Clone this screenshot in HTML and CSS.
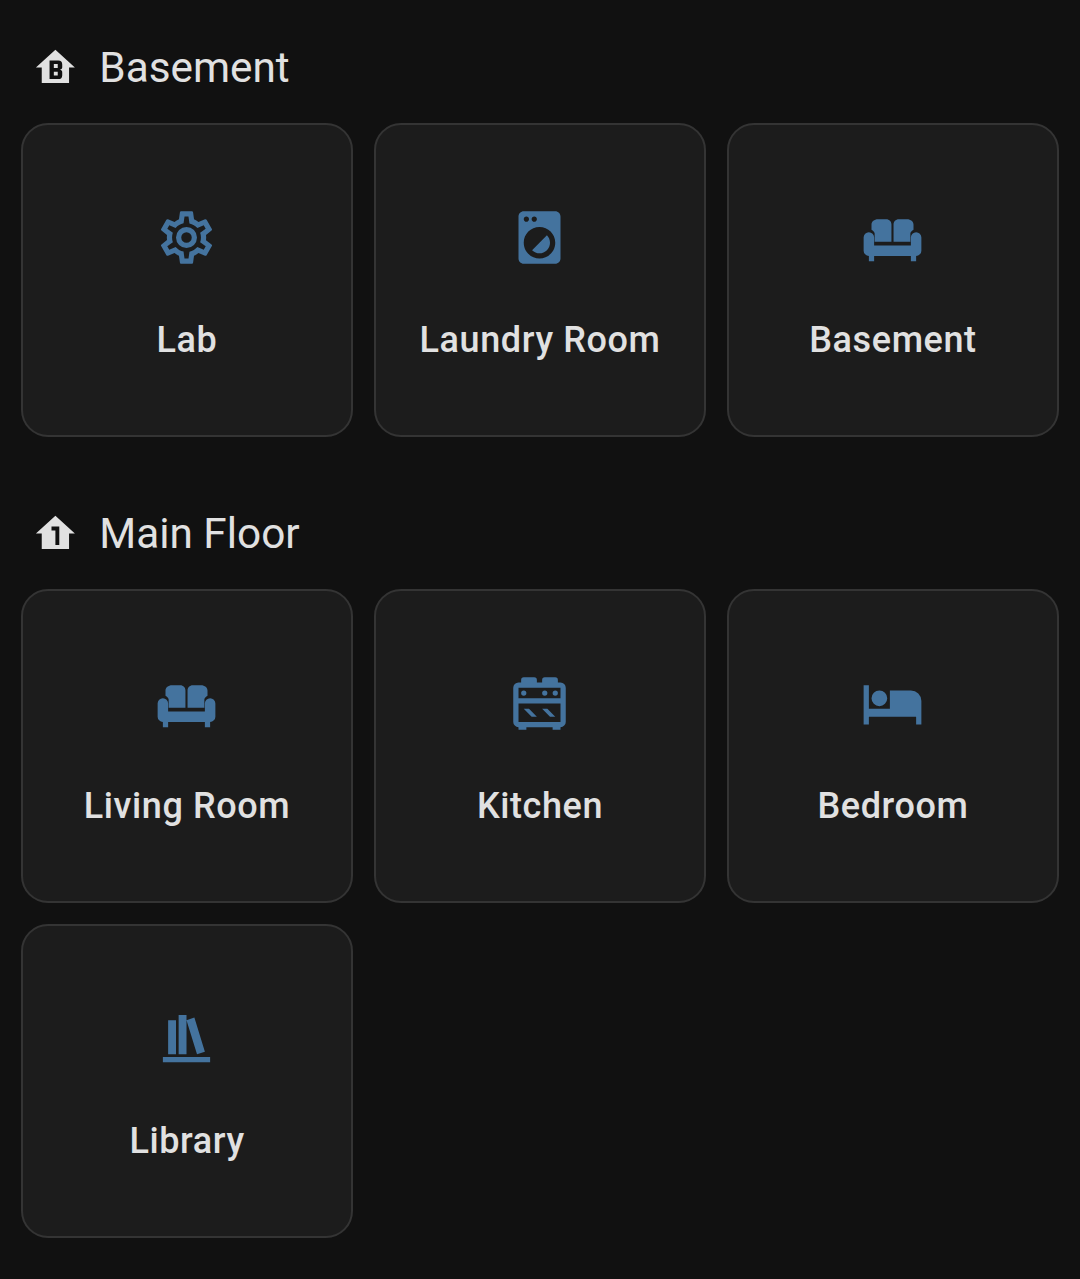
FILE: index.html
```html
<!DOCTYPE html>
<html lang="en">
<head>
    <meta charset="UTF-8">
    <meta name="viewport" content="width=device-width, initial-scale=1.0">
    <title>Areas</title>
    <link rel="stylesheet" href="styles.css">
</head>
<body>
    <section class="floor">
        <h2 class="floor-title">
            <svg class="floor-icon" viewBox="0 0 24 24"><path fill-rule="evenodd" d="M12 3L2 12H5V20H19V12H22L12 3ZM9 8.5H13.5A2 2 0 0 1 15.5 10.5V11.7A1.4 1.4 0 0 1 14.3 13.2A1.4 1.4 0 0 1 15.5 14.7V16A2 2 0 0 1 13.5 18H9ZM11.2 10.3V12.3H13.2V10.3ZM11.2 14.2V16.2H13.2V14.2Z"/></svg>
            <span>Basement</span>
        </h2>
        <div class="area-grid">
            <div class="area-card">
                <svg class="area-icon" viewBox="0 0 24 24"><path d="M12,8A4,4 0 0,1 16,12A4,4 0 0,1 12,16A4,4 0 0,1 8,12A4,4 0 0,1 12,8M12,10A2,2 0 0,0 10,12A2,2 0 0,0 12,14A2,2 0 0,0 14,12A2,2 0 0,0 12,10M10,22C9.75,22 9.54,21.82 9.5,21.58L9.13,18.93C8.5,18.68 7.96,18.34 7.44,17.94L4.95,18.95C4.73,19.03 4.46,18.95 4.34,18.73L2.34,15.27C2.21,15.05 2.27,14.78 2.46,14.63L4.57,12.97L4.5,12L4.57,11L2.46,9.37C2.27,9.22 2.21,8.95 2.34,8.73L4.34,5.27C4.46,5.05 4.73,4.96 4.95,5.05L7.44,6.05C7.96,5.66 8.5,5.32 9.13,5.07L9.5,2.42C9.54,2.18 9.75,2 10,2H14C14.25,2 14.46,2.18 14.5,2.42L14.87,5.07C15.5,5.32 16.04,5.66 16.56,6.05L19.05,5.05C19.27,4.96 19.54,5.05 19.66,5.27L21.66,8.73C21.79,8.95 21.73,9.22 21.54,9.37L19.43,11L19.5,12L19.43,13L21.54,14.63C21.73,14.78 21.79,15.05 21.66,15.27L19.66,18.73C19.54,18.95 19.27,19.04 19.05,18.95L16.56,17.95C16.04,18.34 15.5,18.68 14.87,18.93L14.5,21.58C14.46,21.82 14.25,22 14,22H10M11.25,4L10.88,6.61C9.68,6.86 8.62,7.5 7.85,8.39L5.44,7.35L4.69,8.65L6.8,10.2C6.4,11.37 6.4,12.64 6.8,13.8L4.68,15.36L5.43,16.66L7.86,15.62C8.63,16.5 9.68,17.14 10.87,17.38L11.24,20H12.76L13.13,17.39C14.32,17.14 15.37,16.5 16.14,15.62L18.57,16.66L19.32,15.36L17.2,13.81C17.6,12.64 17.6,11.37 17.2,10.2L19.31,8.65L18.56,7.35L16.15,8.39C15.38,7.5 14.32,6.86 13.12,6.62L12.75,4H11.25Z"/></svg>
                <div class="area-name">Lab</div>
            </div>
            <div class="area-card">
                <svg class="area-icon" viewBox="0 0 24 24"><path d="M14.83,11.17C16.39,12.73 16.39,15.27 14.83,16.83C13.27,18.39 10.73,18.39 9.17,16.83L14.83,11.17M6,2H18C19.11,2 20,2.89 20,4V20C20,21.11 19.11,22 18,22H6C4.89,22 4,21.11 4,20V4C4,2.89 4.89,2 6,2M7,4C6.45,4 6,4.45 6,5C6,5.55 6.45,6 7,6C7.55,6 8,5.55 8,5C8,4.45 7.55,4 7,4M10,4C9.45,4 9,4.45 9,5C9,5.55 9.45,6 10,6C10.55,6 11,5.55 11,5C11,4.45 10.55,4 10,4M12,8C8.69,8 6,10.69 6,14C6,17.31 8.69,20 12,20C15.31,20 18,17.31 18,14C18,10.69 15.31,8 12,8Z"/></svg>
                <div class="area-name">Laundry Room</div>
            </div>
            <div class="area-card">
                <svg class="area-icon" viewBox="0 0 24 24"><path d="M6.5 5H9.6C10.8 5 11.6 5.9 11.6 7V13.6H5.2V10.5C5.2 9.9 4.6 9.4 4 9V7C4 5.9 5 5 6.5 5ZM14.4 5H17.5C19 5 20 5.9 20 7V9C19.4 9.4 18.8 9.9 18.8 10.5V13.6H12.4V7C12.4 5.9 13.2 5 14.4 5ZM3 10A2 2 0 0 1 5 12V15H19V12A2 2 0 0 1 23 12V17A2 2 0 0 1 21 19V21H19V19H5V21H3V19A2 2 0 0 1 1 17V12A2 2 0 0 1 3 10Z"/></svg>
                <div class="area-name">Basement</div>
            </div>
        </div>
    </section>

    <section class="floor">
        <h2 class="floor-title">
            <svg class="floor-icon" viewBox="0 0 24 24"><path d="M12,3L2,12H5V20H19V12H22L12,3M10,8.5H14V18H12V10.5H10V8.5Z"/></svg>
            <span>Main Floor</span>
        </h2>
        <div class="area-grid">
            <div class="area-card">
                <svg class="area-icon" viewBox="0 0 24 24"><path d="M6.5 5H9.6C10.8 5 11.6 5.9 11.6 7V13.6H5.2V10.5C5.2 9.9 4.6 9.4 4 9V7C4 5.9 5 5 6.5 5ZM14.4 5H17.5C19 5 20 5.9 20 7V9C19.4 9.4 18.8 9.9 18.8 10.5V13.6H12.4V7C12.4 5.9 13.2 5 14.4 5ZM3 10A2 2 0 0 1 5 12V15H19V12A2 2 0 0 1 23 12V17A2 2 0 0 1 21 19V21H19V19H5V21H3V19A2 2 0 0 1 1 17V12A2 2 0 0 1 3 10Z"/></svg>
                <div class="area-name">Living Room</div>
            </div>
            <div class="area-card">
                <svg class="area-icon" viewBox="0 0 24 24"><path d="M6,14H8L11,17H9L6,14M4,4H5V3A1,1 0 0,1 6,2H10A1,1 0 0,1 11,3V4H13V3A1,1 0 0,1 14,2H18A1,1 0 0,1 19,3V4H20A2,2 0 0,1 22,6V19A2,2 0 0,1 20,21V22H17V21H7V22H4V21A2,2 0 0,1 2,19V6A2,2 0 0,1 4,4M18,7A1,1 0 0,1 19,8A1,1 0 0,1 18,9A1,1 0 0,1 17,8A1,1 0 0,1 18,7M14,7A1,1 0 0,1 15,8A1,1 0 0,1 14,9A1,1 0 0,1 13,8A1,1 0 0,1 14,7M20,6H4V10H20V6M4,19H20V12H4V19M6,7A1,1 0 0,1 7,8A1,1 0 0,1 6,9A1,1 0 0,1 5,8A1,1 0 0,1 6,7M13,14H15L18,17H16L13,14Z"/></svg>
                <div class="area-name">Kitchen</div>
            </div>
            <div class="area-card">
                <svg class="area-icon" viewBox="0 0 24 24"><path d="M19,7H11V14H3V5H1V20H3V17H21V20H23V11A4,4 0 0,0 19,7M7,13A3,3 0 0,0 10,10A3,3 0 0,0 7,7A3,3 0 0,0 4,10A3,3 0 0,0 7,13Z"/></svg>
                <div class="area-name">Bedroom</div>
            </div>
            <div class="area-card">
                <svg class="area-icon" viewBox="0 0 24 24"><path d="M9 3V18H12V3H9M12 5L16 18L19 17L15 4L12 5M5 5V18H8V5H5M3 19V21H21V19H3Z"/></svg>
                <div class="area-name">Library</div>
            </div>
        </div>
    </section>
</body>
</html>
```

FILE: styles.css
```css
* {
    box-sizing: border-box;
}

body {
    margin: 0;
    padding: 43px 21px 0;
    background-color: #111111;
    color: #e1e1e1;
    font-family: Roboto, "Liberation Sans", sans-serif;
}

.floor {
    margin-bottom: 72px;
}

.floor-title {
    display: flex;
    align-items: center;
    gap: 20.5px;
    height: 48px;
    margin: 0 0 32px;
    padding-left: 11px;
    font-size: 42.3px;
    font-weight: 400;
}

.floor-icon {
    width: 46.8px;
    height: 46.8px;
    fill: #e1e1e1;
}

.area-grid {
    display: grid;
    grid-template-columns: repeat(3, 1fr);
    gap: 21px;
}

.area-card {
    display: flex;
    flex-direction: column;
    align-items: center;
    height: 314px;
    padding-top: 81px;
    background-color: #1c1c1c;
    border: 2px solid #343434;
    border-radius: 27px;
}

.area-icon {
    width: 63px;
    height: 63px;
    margin-right: 1px;
    fill: #44739e;
}

.area-name {
    margin-top: 48.5px;
    font-size: 36px;
    font-weight: 500;
    letter-spacing: 0.6px;
    line-height: 44px;
}
```
